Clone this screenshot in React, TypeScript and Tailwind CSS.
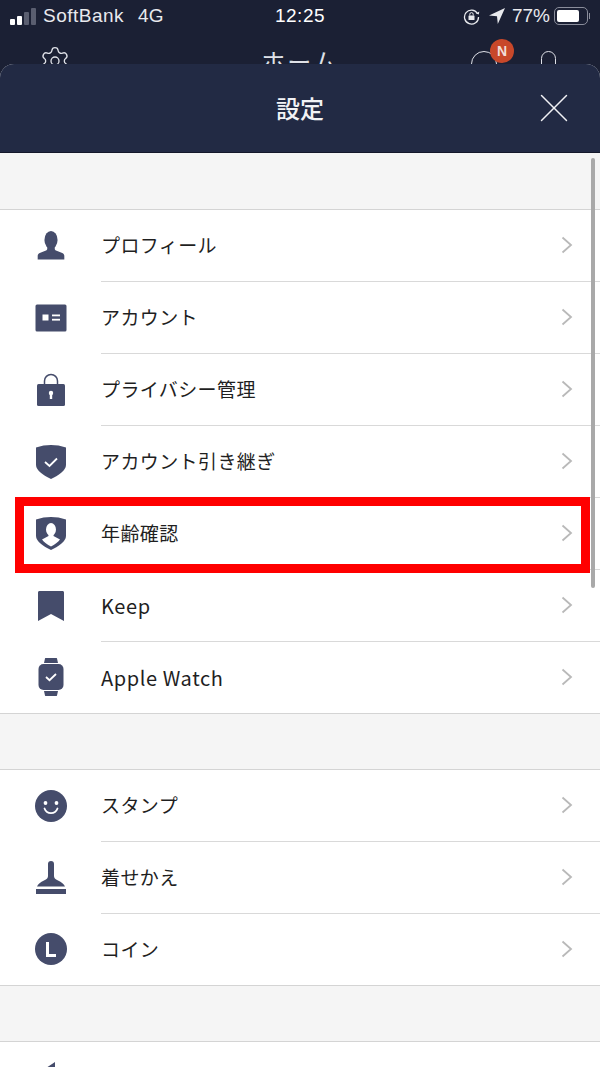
import React from 'react';
import { Settings, X } from 'lucide-react';

const ICON = '#454c6b';

const ProfileIcon = () => (
    <svg width="30" height="33" viewBox="0 0 32 32" fill={ICON}>
        <ellipse cx="16" cy="10" rx="7" ry="9.5" />
        <path d="M12 17h8v2.5c0 1 .8 1.7 2 2.2l6 2.3c1.4.6 2.2 1.6 2.2 3.1V31H1.8v-3.900c0-1.500.8-2.500 2.200-3.100l6-2.300c1.200-.5 2-1.200 2-2.200z" />
    </svg>
);

const AccountIcon = () => (
    <svg width="32" height="28" viewBox="0 0 32 28">
        <rect x="0.500" y="0.500" width="31" height="27" rx="1.500" fill={ICON} />
        <rect x="7.500" y="10.500" width="6" height="6" fill="#fff" />
        <rect x="17" y="10.500" width="8" height="1.800" fill="#fff" />
        <rect x="17" y="14.800" width="8" height="1.800" fill="#fff" />
    </svg>
);

const LockIcon = () => (
    <svg width="30" height="34" viewBox="0 0 30 34">
        <path d="M8.500 11V8a6.500 6.500 0 0 1 13 0v3" fill="none" stroke={ICON} strokeWidth="1.500" />
        <rect x="1" y="11" width="28" height="22" rx="1.500" fill={ICON} />
        <circle cx="15" cy="20" r="2.200" fill="#fff" />
        <rect x="13.800" y="20" width="2.400" height="6" fill="#fff" />
    </svg>
);

const ShieldCheckIcon = () => (
    <svg width="30" height="34" viewBox="0 0 30 34">
        <path d="M0 2.500C5 .8 10 0 15 0s10 .8 15 2.500V20c0 5-7 10.500-15 14C7 30.500 0 25 0 20z" fill={ICON} />
        <path d="M9 17l4.500 4L21 13.500" fill="none" stroke="#fff" strokeWidth="1.800" />
    </svg>
);

const ShieldPersonIcon = () => (
    <svg width="30" height="33" viewBox="0 0 30 33">
        <path d="M0 2.500C5 .8 10 0 15 0s10 .8 15 2.500V19c0 5-7 10.500-15 14C7 29.500 0 24 0 19z" fill={ICON} />
        <ellipse cx="15" cy="12.500" rx="5" ry="6.500" fill="#fff" />
        <path d="M12.500 17h5v2l6.500 3.500c-2 2.800-5.200 5-9 7-3.800-2-7-4.200-9-7l6.500-3.500z" fill="#fff" />
    </svg>
);

const BookmarkIcon = () => (
    <svg width="26" height="30" viewBox="0 0 26 30" fill={ICON}>
        <path d="M0 1.500C0 .6.600 0 1.500 0h23c.9 0 1.500.6 1.500 1.500V30L13 23 0 30z" />
    </svg>
);

const WatchIcon = () => (
    <svg width="26" height="38" viewBox="0 0 26 38">
        <path d="M6 5l1-4.500C7.100 0 7.500 0 8 0h10c.5 0 .9 0 1 .5L20 5zM6 33l1 4.500c.1.500.5.500 1 .500h10c.5 0 .9 0 1-.5L20 33z" fill={ICON} />
        <rect x="0.500" y="6" width="25" height="26" rx="5" fill={ICON} />
        <path d="M8 19l3.500 3.200L18 16" fill="none" stroke="#fff" strokeWidth="1.800" />
    </svg>
);

const SmileIcon = () => (
    <svg width="32" height="32" viewBox="0 0 32 32">
        <circle cx="16" cy="16" r="16" fill={ICON} />
        <circle cx="10.500" cy="13" r="1.900" fill="#fff" />
        <circle cx="21.500" cy="13" r="1.900" fill="#fff" />
        <path d="M9.500 18.500c1.200 3.200 3.600 4.700 6.500 4.700s5.300-1.500 6.500-4.700" fill="none" stroke="#fff" strokeWidth="1.800" strokeLinecap="round" />
    </svg>
);

const BrushIcon = () => (
    <svg width="30" height="33" viewBox="0 0 30 33" fill={ICON}>
        <path d="M12 3a3 3 0 0 1 6 0v12c0 2 1 3 4 4.500 3.500 1.800 6 3.500 7 6H1c1-2.500 3.500-4.200 7-6 3-1.500 4-2.500 4-4.500z" />
        <rect x="0" y="28" width="30" height="5" />
    </svg>
);

const CoinIcon = () => (
    <svg width="32" height="32" viewBox="0 0 32 32">
        <circle cx="16" cy="16" r="16" fill={ICON} />
        <path d="M12.500 9v13.500H21" fill="none" stroke="#fff" strokeWidth="3" />
    </svg>
);

const Chevron = () => (
    <svg width="12" height="18" viewBox="0 0 12 18" fill="none" className="mb-[2px]">
        <path d="M1.500 1.500L10 9l-8.500 7.500" stroke="#b9b9b9" strokeWidth="1.800" />
    </svg>
);

const Row = ({ icon, label, last, latin }: { icon: React.ReactNode; label: string; last?: boolean; latin?: boolean }) => (
    <div className={`flex bg-white ${last ? 'h-[71px]' : 'h-[72px]'}`}>
        <div className="w-[101px] shrink-0 flex items-center justify-center mb-[1px]">{icon}</div>
        <div className={`flex-1 flex items-center justify-between pr-[27px] ${last ? '' : 'border-b border-[#d9d9d9]'}`}>
            <span className={latin ? 'text-[20px] tracking-[0.6px] text-[#1f1f1f]' : 'text-[19px] tracking-[0.4px] text-[#1f1f1f]'}>{label}</span>
            <Chevron />
        </div>
    </div>
);

const Group = ({ children }: { children: React.ReactNode }) => (
    <div className="border-y border-[#d4d4d4] bg-white">{children}</div>
);

export default function App() {
    return (
        <div className="relative w-[600px] h-[1067px] overflow-hidden bg-[#1b2034] font-['Noto_Sans_CJK_JP','Noto_Sans',sans-serif]">
            {/* status bar */}
            <div className="h-[32px] flex items-center justify-between pl-[10px] pr-[10px] text-[#e9eaee] font-['Liberation_Sans',sans-serif] text-[19px]">
                <div className="flex items-center w-[200px]">
                    <div className="flex items-end gap-[2px] mr-[7px]">
                        <div className="w-[5px] h-[6px] rounded-[1px] bg-white" />
                        <div className="w-[5px] h-[9px] rounded-[1px] bg-white" />
                        <div className="w-[5px] h-[13px] rounded-[1px] bg-[#5a5e70]" />
                        <div className="w-[5px] h-[17px] rounded-[1px] bg-[#5a5e70]" />
                    </div>
                    <span className="tracking-[0.5px]">SoftBank</span>
                    <span className="ml-[14px]">4G</span>
                </div>
                <span className="font-medium text-white tracking-[0.5px]">12:25</span>
                <div className="flex items-center justify-end w-[200px]">
                    <svg width="17" height="17" viewBox="0 0 17 17" fill="none" className="mr-[9px]">
                        <path d="M14.500 5.500A7 7 0 1 0 15.500 9" stroke="#e9eaee" strokeWidth="1.300" />
                        <path d="M13 5.500l2.800 1 .5-3z" fill="#e9eaee" />
                        <rect x="5.500" y="7.500" width="6" height="4.500" rx="0.500" fill="#e9eaee" />
                        <path d="M6.800 7.500V6.300a1.700 1.700 0 0 1 3.400 0v1.200" stroke="#e9eaee" />
                    </svg>
                    <svg width="16" height="16" viewBox="0 0 16 16" className="mr-[7px]">
                        <path d="M16 0L0 7.500l8 .8.800 7.700z" fill="#e9eaee" />
                    </svg>
                    <span>77%</span>
                    <div className="ml-[4px] w-[34px] h-[18px] rounded-[5px] border border-[#8a8d9b] p-[2px]">
                        <div className="h-full w-[77%] rounded-[2px] bg-white" />
                    </div>
                    <div className="ml-[1px] w-[1px] h-[6px] bg-[#8a8d9b]" />
                </div>
            </div>

            {/* page behind the sheet, mostly covered */}
            <div className="h-[32px] flex justify-between items-start pl-[39px] pr-[44px] text-[#dfe1e8]">
                <Settings size={32} strokeWidth={1} className="mt-[13px]" />
                <span className="ml-[58px] mt-[11px] text-[24px] leading-[36px] tracking-[2px]">ホーム</span>
                <div className="flex items-start">
                    <div className="mt-[19px] w-[26px] h-[26px] rounded-full border border-[#dfe1e8]" />
                    <div className="relative mt-[19px] ml-[44px] w-[15px] h-[22px] rounded-full border border-[#dfe1e8]" />
                </div>
            </div>
            <div className="absolute left-[490px] top-[39px] w-[24px] h-[24px] rounded-full bg-[#c8482a] flex items-center justify-center text-[14px] font-bold text-[#f2ded8] font-['Liberation_Sans',sans-serif]">
                N
            </div>

            {/* settings sheet */}
            <div className="relative rounded-t-[14px] overflow-hidden bg-[#f5f5f5]">
                <div className="relative h-[89px] bg-[#222a44] flex items-center justify-center border-b border-[#14182a]">
                    <span className="text-[24px] font-medium text-[#f1f2f5]">設定</span>
                    <X size={50} strokeWidth={0.700} color="#f1f2f5" className="absolute right-[21px] top-[19px]" />
                </div>
                <div className="h-[56px] bg-[#f5f5f5]" />
                <Group>
                    <Row icon={<ProfileIcon />} label="プロフィール" />
                    <Row icon={<AccountIcon />} label="アカウント" />
                    <Row icon={<LockIcon />} label="プライバシー管理" />
                    <Row icon={<ShieldCheckIcon />} label="アカウント引き継ぎ" />
                    <Row icon={<ShieldPersonIcon />} label="年齢確認" />
                    <Row icon={<BookmarkIcon />} label="Keep" latin />
                    <Row icon={<WatchIcon />} label="Apple Watch" latin last />
                </Group>
                <div className="h-[55px]" />
                <Group>
                    <Row icon={<SmileIcon />} label="スタンプ" />
                    <Row icon={<BrushIcon />} label="着せかえ" />
                    <Row icon={<CoinIcon />} label="コイン" last />
                </Group>
                <div className="h-[55px]" />
                <Group>
                    <div className="h-[40px] pl-[37px] pt-[20px]">
                        <svg width="24" height="20" viewBox="0 0 24 20" fill={ICON}>
                            <path d="M18 0v20L6 14H0V8h6z" />
                        </svg>
                    </div>
                </Group>
            </div>

            {/* scroll indicator */}
            <div className="absolute left-[591px] top-[158px] w-[4px] h-[430px] rounded-full bg-[#a9a9a9]" />
            {/* red annotation */}
            <div className="absolute left-[15px] top-[497px] w-[575px] h-[76px] border-[9px] border-[#ff0000]" />
        </div>
    );
}
